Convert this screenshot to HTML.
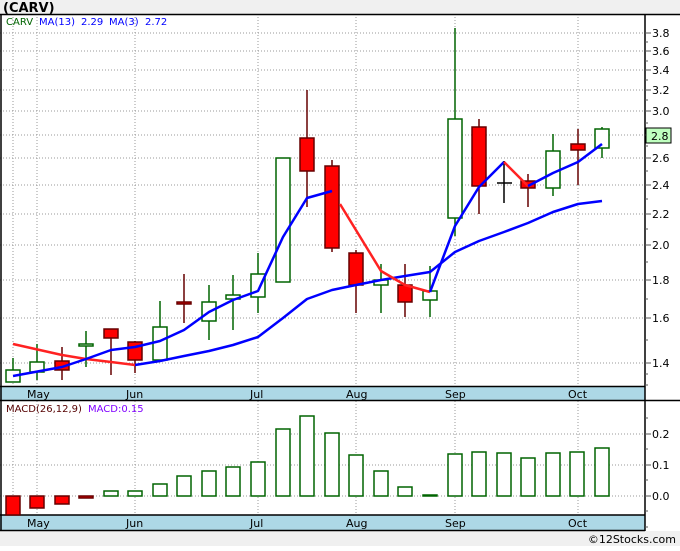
<!DOCTYPE html>
<html><head><style>
body{margin:0;width:680px;height:546px;overflow:hidden;background:#fff;font-family:"Liberation Sans","DejaVu Sans",sans-serif}
</style></head><body>
<svg width="680" height="546" xmlns="http://www.w3.org/2000/svg" font-family="DejaVu Sans, Liberation Sans, sans-serif">
<rect x="0" y="0" width="680" height="546" fill="#fff"/>
<rect x="0" y="0" width="680" height="14" fill="#f0f0f0"/>
<text x="3" y="12" font-size="13" font-weight="bold" fill="#000">(CARV)</text>
<rect x="0" y="531" width="680" height="15" fill="#f0f0f0"/>
<text x="676" y="543" font-size="11" text-anchor="end" fill="#000">©12Stocks.com</text>
<!-- grid -->
<g stroke="#999" stroke-dasharray="1,2" stroke-width="1">
<line x1="0" x2="645" y1="33" y2="33"/><line x1="0" x2="645" y1="51" y2="51"/><line x1="0" x2="645" y1="70" y2="70"/><line x1="0" x2="645" y1="90" y2="90"/><line x1="0" x2="645" y1="111" y2="111"/><line x1="0" x2="645" y1="135" y2="135"/><line x1="0" x2="645" y1="158" y2="158"/><line x1="0" x2="645" y1="185" y2="185"/><line x1="0" x2="645" y1="214" y2="214"/><line x1="0" x2="645" y1="245" y2="245"/><line x1="0" x2="645" y1="280" y2="280"/><line x1="0" x2="645" y1="318" y2="318"/><line x1="0" x2="645" y1="363" y2="363"/>
<line x1="0" x2="645" y1="434" y2="434"/><line x1="0" x2="645" y1="465" y2="465"/><line x1="0" x2="645" y1="496" y2="496"/>
<g><line x1="13" x2="13" y1="14" y2="515"/><line x1="37" x2="37" y1="14" y2="515"/><line x1="135" x2="135" y1="14" y2="515"/><line x1="258" x2="258" y1="14" y2="515"/><line x1="356" x2="356" y1="14" y2="515"/><line x1="455" x2="455" y1="14" y2="515"/><line x1="578" x2="578" y1="14" y2="515"/></g>
</g>
<!-- bands -->
<rect x="0" y="387" width="645" height="13" fill="#add8e6"/>
<rect x="0" y="515" width="645" height="15" fill="#add8e6"/>
<g font-size="11" fill="#000">
<text x="27" y="398">May</text><text x="126" y="398">Jun</text><text x="250" y="398">Jul</text><text x="346" y="398">Aug</text><text x="445" y="398">Sep</text><text x="568" y="398">Oct</text>
<text x="27" y="527">May</text><text x="126" y="527">Jun</text><text x="250" y="527">Jul</text><text x="346" y="527">Aug</text><text x="445" y="527">Sep</text><text x="568" y="527">Oct</text>
</g>
<g stroke="#000" stroke-width="1.5" fill="none">
<line x1="0" x2="680" y1="14.5" y2="14.5"/>
<line x1="0" x2="645" y1="386.5" y2="386.5"/>
<line x1="0" x2="680" y1="400.5" y2="400.5"/>
<line x1="0" x2="645" y1="515" y2="515"/>
<line x1="0" x2="645" y1="530.5" y2="530.5"/>
<line x1="645" x2="645" y1="14" y2="531"/>
<line x1="1" x2="1" y1="14" y2="531"/>
</g>
<!-- axis ticks -->
<g stroke="#555" stroke-width="1">
<path d="M645 33h6M645 42h3M645 51h6M645 61h3M645 70h6M645 80h3M645 90h6M645 100h3M645 111h6M645 123h3M645 135h6M645 146h3M645 158h6M645 171h3M645 185h6M645 199h3M645 214h6M645 229h3M645 245h6M645 262h3M645 280h6M645 299h3M645 318h6M645 340h3M645 363h6M645 374h3M645 385h3"/>
<path d="M645 418h3M645 434h6M645 449h3M645 465h6M645 480h3M645 496h6M645 511h3M645 527h3"/>
</g>
<g font-size="11" fill="#000">
<text x="652" y="37">3.8</text><text x="652" y="55">3.6</text><text x="652" y="74">3.4</text><text x="652" y="94">3.2</text><text x="652" y="115">3.0</text><text x="652" y="162">2.6</text><text x="652" y="189">2.4</text><text x="652" y="218">2.2</text><text x="652" y="249">2.0</text><text x="652" y="284">1.8</text><text x="652" y="322">1.6</text><text x="652" y="367">1.4</text>
<text x="652" y="438">0.2</text><text x="652" y="469">0.1</text><text x="652" y="500">0.0</text>
</g>
<rect x="646" y="128" width="25" height="15" fill="#bfffbf" stroke="#000"/>
<text x="651" y="140" font-size="11" fill="#000">2.8</text>
<!-- legends -->
<g font-size="10">
<text x="6" y="25" fill="#006400">CARV</text>
<text x="39" y="25" fill="#0000ff">MA(13)</text>
<text x="81" y="25" fill="#0000ff">2.29</text>
<text x="109" y="25" fill="#0000ff">MA(3)</text>
<text x="145" y="25" fill="#0000ff">2.72</text>
<text x="6" y="412" fill="#500">MACD(26,12,9)</text>
<text x="88" y="412" fill="#8000ff">MACD:0.15</text>
</g>
<!-- candles -->
<g stroke-width="1.5">
<g stroke="#006400" fill="#fff">
<line x1="13" x2="13" y1="358" y2="370"/><rect x="6" y="370" width="14" height="12"/>
<line x1="37" x2="37" y1="344" y2="380"/><rect x="30" y="362" width="14" height="10"/>
<line x1="86" x2="86" y1="331" y2="367"/><rect x="79" y="344" width="14" height="2"/>
<line x1="160" x2="160" y1="301" y2="362"/><rect x="153" y="327" width="14" height="33"/>
<line x1="209" x2="209" y1="285" y2="340"/><rect x="202" y="302" width="14" height="19"/>
<line x1="233" x2="233" y1="275" y2="330"/><rect x="226" y="295" width="14" height="4"/>
<line x1="258" x2="258" y1="253" y2="313"/><rect x="251" y="274" width="14" height="23"/>
<rect x="276" y="158" width="14" height="124"/>
<line x1="381" x2="381" y1="264" y2="313"/><rect x="374" y="280" width="14" height="5"/>
<line x1="430" x2="430" y1="266" y2="317"/><rect x="423" y="291" width="14" height="9"/>
<line x1="455" x2="455" y1="28" y2="236"/><rect x="448" y="119" width="14" height="99"/>
<line x1="553" x2="553" y1="134" y2="196"/><rect x="546" y="151" width="14" height="37"/>
<line x1="602" x2="602" y1="127" y2="158"/><rect x="595" y="129" width="14" height="19"/>
</g>
<g stroke="#600" fill="#f00">
<line x1="62" x2="62" y1="347" y2="380"/><rect x="55" y="361" width="14" height="9"/>
<line x1="111" x2="111" y1="329" y2="375"/><rect x="104" y="329" width="14" height="9"/>
<line x1="135" x2="135" y1="341" y2="373"/><rect x="128" y="342" width="14" height="18"/>
<line x1="184" x2="184" y1="274" y2="323"/><rect x="177" y="302" width="14" height="2"/>
<line x1="307" x2="307" y1="90" y2="207"/><rect x="300" y="138" width="14" height="33"/>
<line x1="332" x2="332" y1="160" y2="252"/><rect x="325" y="166" width="14" height="82"/>
<line x1="356" x2="356" y1="250" y2="313"/><rect x="349" y="253" width="14" height="32"/>
<line x1="405" x2="405" y1="264" y2="317"/><rect x="398" y="285" width="14" height="17"/>
<line x1="479" x2="479" y1="119" y2="214"/><rect x="472" y="127" width="14" height="59"/>
<line x1="528" x2="528" y1="174" y2="207"/><rect x="521" y="181" width="14" height="7"/>
<line x1="578" x2="578" y1="129" y2="185"/><rect x="571" y="144" width="14" height="6"/>
</g>
<g stroke="#000"><line x1="504" x2="504" y1="161" y2="203"/><line x1="497" x2="512" y1="183" y2="183"/></g>
</g>
<!-- MAs -->
<g fill="none" stroke-width="2.5" stroke-linejoin="round">
<polyline stroke="#f22" points="13,344 62,355 86,359 111,362 135,365"/>
<polyline stroke="#00f" points="135,365 160,361 184,356 209,351 233,345 258,337 283,318 307,299 332,290 356,285 381,280 405,276 430,272 455,252 479,241 504,232 528,223 553,212 578,204 602,201"/>
<polyline stroke="#00f" points="13,376 62,367 86,359 111,350 135,347 160,341 184,330 209,312 233,300 258,291 283,237 307,198 332,191"/>
<polyline stroke="#f22" points="340,204 381,271 405,285 430,292"/>
<polyline stroke="#00f" points="430,292 455,226 479,187 504,162"/>
<polyline stroke="#f22" points="504,162 528,186"/>
<polyline stroke="#00f" points="528,186 553,173 578,162 602,144"/>
</g>
<!-- MACD -->
<g stroke-width="1.5">
<g stroke="#600" fill="#f00">
<rect x="6" y="496" width="14" height="19"/><rect x="30" y="496" width="14" height="12"/><rect x="55" y="496" width="14" height="8"/><rect x="79" y="496" width="14" height="2"/>
</g>
<g stroke="#006400" fill="#fff">
<rect x="104" y="491" width="14" height="5"/><rect x="128" y="491" width="14" height="5"/><rect x="153" y="484" width="14" height="12"/><rect x="177" y="476" width="14" height="20"/><rect x="202" y="471" width="14" height="25"/><rect x="226" y="467" width="14" height="29"/><rect x="251" y="462" width="14" height="34"/><rect x="276" y="429" width="14" height="67"/><rect x="300" y="416" width="14" height="80"/><rect x="325" y="433" width="14" height="63"/><rect x="349" y="455" width="14" height="41"/><rect x="374" y="471" width="14" height="25"/><rect x="398" y="487" width="14" height="9"/><rect x="423" y="495" width="14" height="1"/><rect x="448" y="454" width="14" height="42"/><rect x="472" y="452" width="14" height="44"/><rect x="497" y="453" width="14" height="43"/><rect x="521" y="458" width="14" height="38"/><rect x="546" y="453" width="14" height="43"/><rect x="570" y="452" width="14" height="44"/><rect x="595" y="448" width="14" height="48"/>
</g>
</g>
</svg>
</body></html>
